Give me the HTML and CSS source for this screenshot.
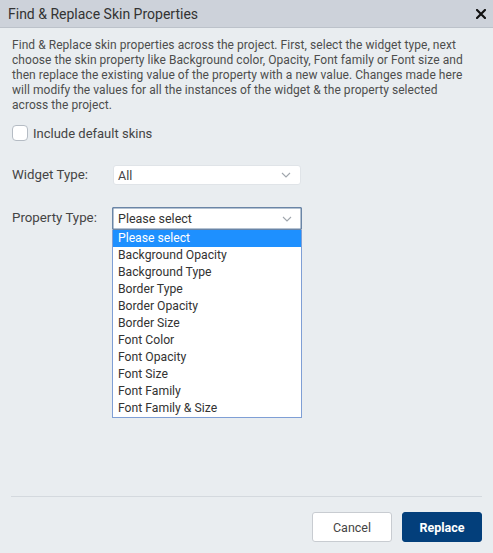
FILE: index.html
```html
<!DOCTYPE html>
<html>
<head>
<meta charset="utf-8">
<link rel="stylesheet" href="styles.css">
</head>
<body>
<div class="dialog">
  <div class="header">
    <span class="title">Find &amp; Replace Skin Properties</span>
    <svg class="close" width="10" height="10" viewBox="0 0 10 10"><path d="M1 1L9 9M9 1L1 9" stroke="#111" stroke-width="2.2" stroke-linecap="square"/></svg>
  </div>
  <div class="body">
    <p class="desc">Find &amp; Replace skin properties across the project. First, select the widget type, next choose the skin property like Background color, Opacity, Font family or Font size and then replace the existing value of the property with a new value. Changes made here will modify the values for all the instances of the widget &amp; the property selected across the project.</p>
    <label class="check"><span class="box"></span><span>Include default skins</span></label>
    <div class="row row-widget">
      <span class="label">Widget Type:</span>
      <div class="select"><span>All</span><svg class="chev" width="10" height="6" viewBox="0 0 10 6"><path d="M1 1L5 5L9 1" fill="none" stroke="#a0a6ad" stroke-width="1.1"/></svg></div>
    </div>
    <div class="row row-prop">
      <span class="label">Property Type:</span>
      <div class="select-wrap">
        <div class="select focused"><span>Please select</span><svg class="chev" width="10" height="6" viewBox="0 0 10 6"><path d="M1 1L5 5L9 1" fill="none" stroke="#a0a6ad" stroke-width="1.1"/></svg></div>
        <ul class="list">
          <li class="sel">Please select</li>
          <li>Background Opacity</li>
          <li>Background Type</li>
          <li>Border Type</li>
          <li>Border Opacity</li>
          <li>Border Size</li>
          <li>Font Color</li>
          <li>Font Opacity</li>
          <li>Font Size</li>
          <li>Font Family</li>
          <li>Font Family &amp; Size</li>
        </ul>
      </div>
    </div>
  </div>
  <div class="footer">
    <button class="btn cancel">Cancel</button>
    <button class="btn primary">Replace</button>
  </div>
</div>
</body>
</html>
```
FILE: styles.css
```css
html, body { margin: 0; padding: 0; }
body {
  width: 493px; height: 553px; overflow: hidden;
  background: #e9edf0;
  font-family: Roboto, "Liberation Sans", sans-serif;
  color: #444;
}
.dialog { display: flex; flex-direction: column; height: 553px; }
.header {
  height: 28px; box-sizing: border-box;
  background: #cdd2da; border-bottom: 1px solid #bcc2ca;
  display: flex; align-items: center; justify-content: space-between;
  padding: 0 7px 0 8px;
}
.title { font-size: 14px; color: #333; }
.close { display: block; }
.body { flex: 1; padding: 0 12px; }
.desc {
  margin: 10px 0 0; max-width: 462px;
  font-size: 12px; line-height: 15px; color: #4d4d4d; letter-spacing: 0.05px;
}
.check { display: flex; align-items: center; gap: 5px; margin-top: 12px; font-size: 13px; color: #444; }
.box {
  width: 14px; height: 14px; border: 1px solid #b5bcc4; border-radius: 4px; background: #fff;
}
.row { display: flex; align-items: flex-start; }
.label { width: 101px; font-size: 13.3px; color: #444; }
.row-widget { margin-top: 24px; }
.row-widget .label { line-height: 20px; }
.row-prop { margin-top: 22px; }
.row-prop .label { line-height: 22px; width: 100px; }
.select {
  width: 188px; height: 20px; box-sizing: border-box;
  background: #fff; border: 1px solid #e0e4e8; border-radius: 3px;
  display: flex; align-items: center; justify-content: space-between;
  padding: 0 9px 0 4px; font-size: 12.5px; color: #444;
}
.select-wrap { width: 190px; }
.select.focused {
  width: 190px; height: 23px; border: 1px solid #6a85a6; border-radius: 1px;
  box-shadow: inset 0 0 0 0.5px #6a85a6;
  padding-left: 5px; color: #333;
}
.chev { display: block; }
.list {
  list-style: none; margin: 0; padding: 0;
  border: 1px solid #7f9fd5; border-top: none; background: #fff;
  font-size: 12.2px;
}
.list li { height: 17px; line-height: 17px; padding-left: 5px; color: #333; }
.list li.sel { background: #1e90ff; color: #fff; }
.footer {
  margin: 0 11px; border-top: 1.5px solid #d4d9de;
  display: flex; justify-content: flex-end; gap: 10px;
  padding: 15px 0 11px;
}
.btn {
  width: 80px; height: 30px; border-radius: 3px; font-family: Roboto, "Liberation Sans", sans-serif;
  font-size: 12.5px; cursor: pointer;
}
.cancel { background: #fff; border: 1px solid #c8ccd1; color: #444; }
.primary { background: #033f7b; border: 1px solid #033f7b; color: #fff; font-weight: bold; }
```
